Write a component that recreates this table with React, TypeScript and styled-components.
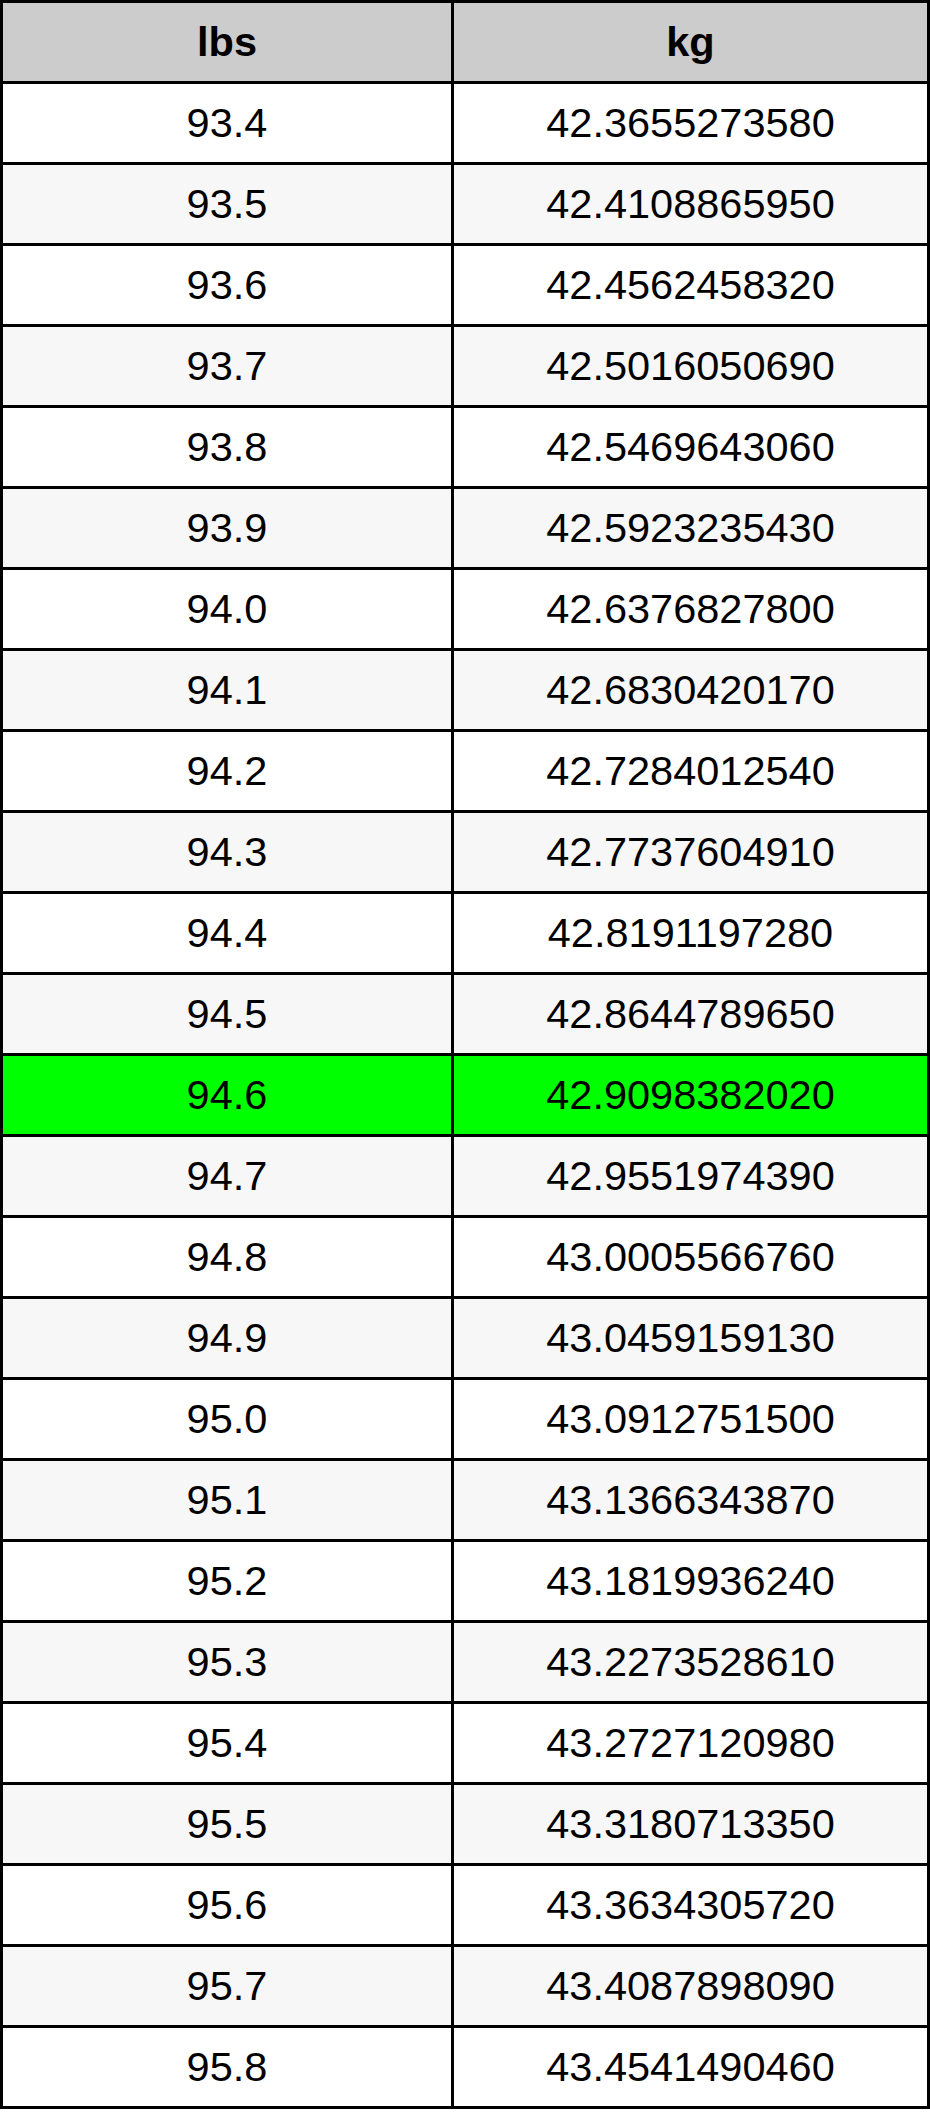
import React from 'react';
import styled, { createGlobalStyle } from 'styled-components';

const GlobalStyle = createGlobalStyle`
  html, body {
    margin: 0;
    padding: 0;
    background: #ffffff;
  }
  body {
    font-family: "Liberation Sans", Arial, Helvetica, sans-serif;
    color: #000000;
  }
`;

// rows of the conversion table, lbs -> kg
const rows: [string, string][] = [
  ['93.4', '42.3655273580'],
  ['93.5', '42.4108865950'],
  ['93.6', '42.4562458320'],
  ['93.7', '42.5016050690'],
  ['93.8', '42.5469643060'],
  ['93.9', '42.5923235430'],
  ['94.0', '42.6376827800'],
  ['94.1', '42.6830420170'],
  ['94.2', '42.7284012540'],
  ['94.3', '42.7737604910'],
  ['94.4', '42.8191197280'],
  ['94.5', '42.8644789650'],
  ['94.6', '42.9098382020'],
  ['94.7', '42.9551974390'],
  ['94.8', '43.0005566760'],
  ['94.9', '43.0459159130'],
  ['95.0', '43.0912751500'],
  ['95.1', '43.1366343870'],
  ['95.2', '43.1819936240'],
  ['95.3', '43.2273528610'],
  ['95.4', '43.2727120980'],
  ['95.5', '43.3180713350'],
  ['95.6', '43.3634305720'],
  ['95.7', '43.4087898090'],
  ['95.8', '43.4541490460'],
];

const HIGHLIGHT = '94.6';

const Table = styled.div`
  display: grid;
  grid-template-columns: 451px 476px;
  grid-auto-rows: 81px;
  width: 930px;
  box-sizing: border-box;
  border-top: 3px solid #000;
  border-left: 3px solid #000;
`;

type Tone = 'head' | 'white' | 'gray' | 'hit';

const tones: Record<Tone, string> = {
  head: '#cccccc',
  white: '#ffffff',
  gray: '#f7f7f7',
  hit: '#00ff00',
};

const Cell = styled.div<{ $tone: Tone }>`
  display: flex;
  align-items: center;
  justify-content: center;
  box-sizing: border-box;
  border-right: 3px solid #000;
  border-bottom: 3px solid #000;
  background: ${(p) => tones[p.$tone]};
  font-size: 41.5px;
  font-weight: ${(p) => (p.$tone === 'head' ? 700 : 400)};
  line-height: 1;
  white-space: nowrap;
`;

const App: React.FC = () => {
  return (
    <>
      <GlobalStyle />
      <Table role="table">
        <Cell $tone="head" role="columnheader">lbs</Cell>
        <Cell $tone="head" role="columnheader">kg</Cell>
        {rows.map(([lbs, kg], i) => {
          const tone: Tone = lbs === HIGHLIGHT ? 'hit' : i % 2 === 0 ? 'white' : 'gray';
          return (
            <React.Fragment key={lbs}>
              <Cell $tone={tone} role="cell">{lbs}</Cell>
              <Cell $tone={tone} role="cell">{kg}</Cell>
            </React.Fragment>
          );
        })}
      </Table>
    </>
  );
};

export default App;
